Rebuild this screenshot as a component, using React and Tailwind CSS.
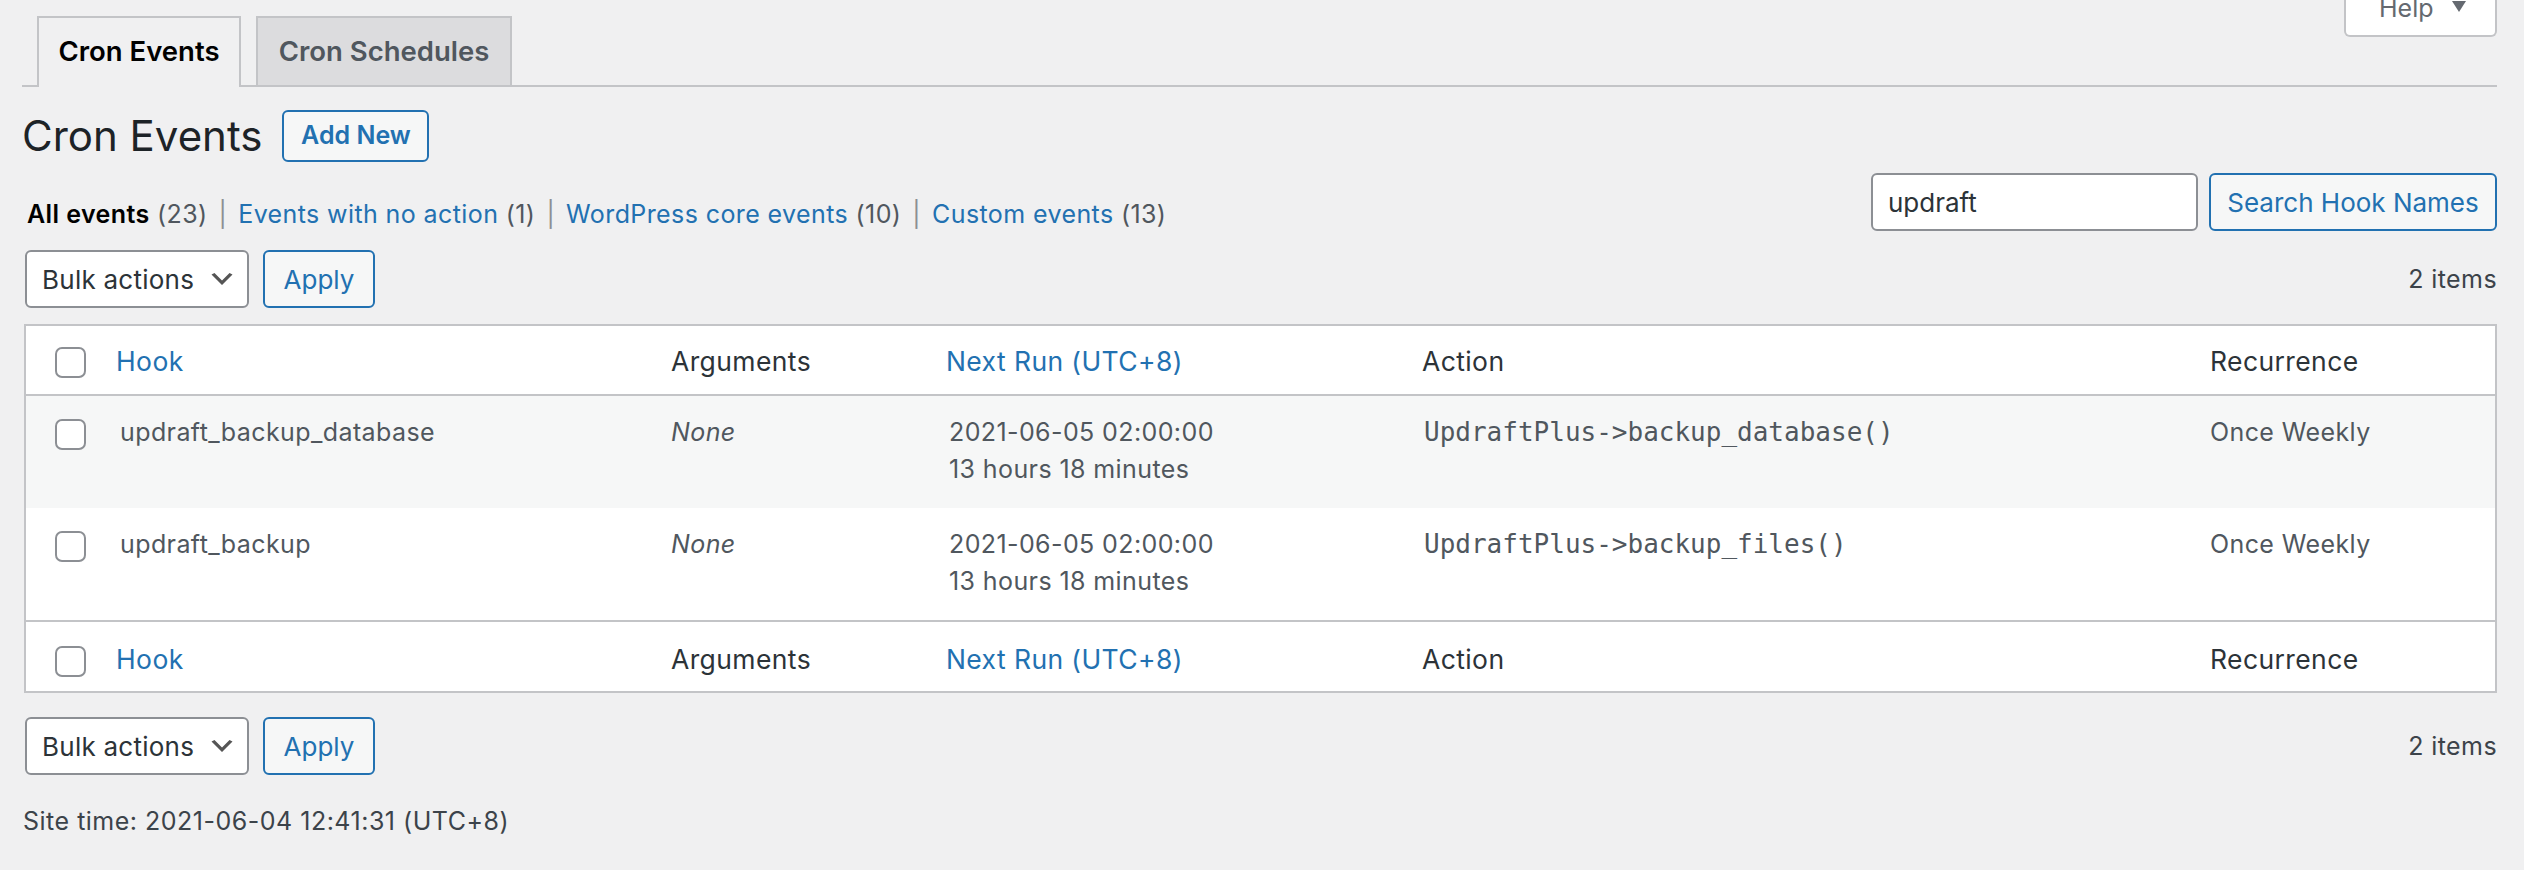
import React from "react";

const Cb = () => (
  <span className="block w-[31px] h-[31px] rounded-[7px] border-2 border-[#8c8f94] bg-white" />
);

const Chevron = () => (
  <svg width="30" height="30" viewBox="0 0 20 20" className="shrink-0">
    <path d="M5 6l5 5 5-5 2 1-7 7-7-7 2-1z" fill="#555" />
  </svg>
);

function BulkRow() {
  return (
    <div className="flex items-center justify-between">
      <div className="flex ml-[3px]">
        <div className="w-[224px] h-[58px] rounded-[6px] border-2 border-[#8c8f94] bg-white flex items-center justify-between pl-[15px] pr-[10px] text-[26px] tracking-[0.25px] text-[#2c3338]">
          <span>Bulk actions</span>
          <Chevron />
        </div>
        <div className="ml-[14px] w-[112px] h-[58px] rounded-[6px] border-2 border-[#2271b1] bg-[#f6f7f7] flex items-center justify-center text-[26px] text-[#2271b1]">
          Apply
        </div>
      </div>
      <span className="text-[25px] tracking-[0.4px] leading-[36px] text-[#3c434a]">2 items</span>
    </div>
  );
}

const GRID = "grid grid-cols-[80px_555px_275px_476px_788px_1fr]";

function HeadRow({ h, cbPt, txtPt, border }) {
  return (
    <div className={`${GRID} ${h} ${border} text-[26.5px]`}>
      <div className={`pl-[29px] ${cbPt}`}><Cb /></div>
      <div className={`pl-[10px] ${txtPt} text-[#2271b1]`}>Hook</div>
      <div className={`pl-[10px] ${txtPt} text-[#2c3338]`}>Arguments</div>
      <div className={`pl-[10px] ${txtPt} text-[#2271b1]`}>Next Run (UTC+8)</div>
      <div className={`pl-[10px] ${txtPt} text-[#2c3338]`}>Action</div>
      <div className={`pl-[10px] ${txtPt} text-[#2c3338]`}>Recurrence</div>
    </div>
  );
}

function DataRow({ bg, hook, action }) {
  return (
    <div className={`${GRID} h-[112px] ${bg} text-[#50575e]`}>
      <div className="pl-[29px] pt-[23px]"><Cb /></div>
      <div className="pl-[14px] pt-[18px]">{hook}</div>
      <div className="pl-[10px] pt-[18px] italic">None</div>
      <div className="pl-[13px] pt-[18px]">
        <div>2021-06-05 02:00:00</div>
        <div className="mt-[1px]">13 hours 18 minutes</div>
      </div>
      <div className="pl-[12px] pt-[18px] font-[family-name:'DejaVu_Sans_Mono',monospace] text-[26px] tracking-normal">
        {action}
      </div>
      <div className="pl-[10px] pt-[18px]">Once Weekly</div>
    </div>
  );
}

export default function App() {
  return (
    <div className="min-h-[870px] w-full bg-[#f0f0f1] font-[family-name:Inter,'Noto_Sans',sans-serif] text-[#3c434a] pl-[22px] pr-[27px]">
      {/* Tabs + help */}
      <div className="grid">
        <div className="col-start-1 row-start-1 flex items-start pt-[16px] border-b-2 border-[#c3c4c7]">
          <div className="ml-[15px] -mb-[2px] h-[71px] w-[204px] border-2 border-b-0 border-[#c3c4c7] bg-[#f0f0f1] flex items-center justify-center pb-[2px]">
            <span className="text-[27.5px] font-semibold text-black">Cron Events</span>
          </div>
          <div className="ml-[15px] h-[69px] w-[256px] border-2 border-b-0 border-[#c3c4c7] bg-[#dcdcde] flex items-center justify-center">
            <span className="text-[27.5px] font-semibold text-[#50575e]">Cron Schedules</span>
          </div>
        </div>
        <div className="col-start-1 row-start-1 justify-self-end self-start -mt-[19px] h-[56px] w-[153px] bg-white border-2 border-t-0 border-[#c3c4c7] rounded-b-[6px] flex items-center pl-[33px]">
          <span className="text-[25px] leading-[25px] text-[#646970]">Help</span>
          <svg width="14" height="11" viewBox="0 0 14 11" className="ml-[18px] -mt-[4px]">
            <path d="M0 0h14L7 11z" fill="#646970" />
          </svg>
        </div>
      </div>

      {/* Title */}
      <div className="mt-[21px] h-[56px] flex items-center">
        <h1 className="text-[42px] leading-[56px] text-[#1d2327] font-normal">Cron Events</h1>
        <div className="ml-[20px] h-[52px] w-[147px] rounded-[6px] border-2 border-[#2271b1] bg-[#f6f7f7] flex items-center justify-center text-[25px] font-semibold text-[#2271b1]">
          Add New
        </div>
      </div>

      {/* Filters + search */}
      <div className="flex justify-between items-start">
        <ul className="mt-[32px] ml-[5px] flex items-center text-[25px] tracking-[0.4px] leading-[36px]">
          <li>
            <span className="font-semibold text-black">All events</span>{" "}
            <span className="text-[#50575e]">(23)</span>
          </li>
          <li className="mx-[11px] text-[#8c8f94]">|</li>
          <li>
            <span className="text-[#2271b1]">Events with no action</span>{" "}
            <span className="text-[#50575e]">(1)</span>
          </li>
          <li className="mx-[11px] text-[#8c8f94]">|</li>
          <li>
            <span className="text-[#2271b1]">WordPress core events</span>{" "}
            <span className="text-[#50575e]">(10)</span>
          </li>
          <li className="mx-[11px] text-[#8c8f94]">|</li>
          <li>
            <span className="text-[#2271b1]">Custom events</span>{" "}
            <span className="text-[#50575e]">(13)</span>
          </li>
        </ul>
        <div className="mt-[9px] flex">
          <div className="w-[327px] h-[58px] rounded-[6px] border-2 border-[#8c8f94] bg-white flex items-center pl-[15px] text-[26px] text-[#2c3338]">
            updraft
          </div>
          <div className="ml-[11px] w-[288px] h-[58px] rounded-[6px] border-2 border-[#2271b1] bg-[#f6f7f7] flex items-center justify-center text-[26px] text-[#2271b1]">
            Search Hook Names
          </div>
        </div>
      </div>

      {/* Top bulk */}
      <div className="mt-[18px]">
        <BulkRow />
      </div>

      {/* Table */}
      <div className="mt-[16px] ml-[2px] border-2 border-[#c3c4c7] bg-white text-[25px] tracking-[0.4px] leading-[36px]">
        <HeadRow h="h-[70px]" cbPt="pt-[21px]" txtPt="pt-[17px]" border="border-b-2 border-[#c3c4c7]" />
        <DataRow bg="bg-[#f6f7f7]" hook="updraft_backup_database" action="UpdraftPlus->backup_database()" />
        <DataRow bg="bg-white" hook="updraft_backup" action="UpdraftPlus->backup_files()" />
        <HeadRow h="h-[71px]" cbPt="pt-[24px]" txtPt="pt-[19px]" border="border-t-2 border-[#c3c4c7]" />
      </div>

      {/* Bottom bulk */}
      <div className="mt-[24px]">
        <BulkRow />
      </div>

      <p className="mt-[28px] ml-[1px] text-[25px] tracking-[0.5px] leading-[36px] text-[#3c434a]">
        Site time: 2021-06-04 12:41:31 (UTC+8)
      </p>
    </div>
  );
}
